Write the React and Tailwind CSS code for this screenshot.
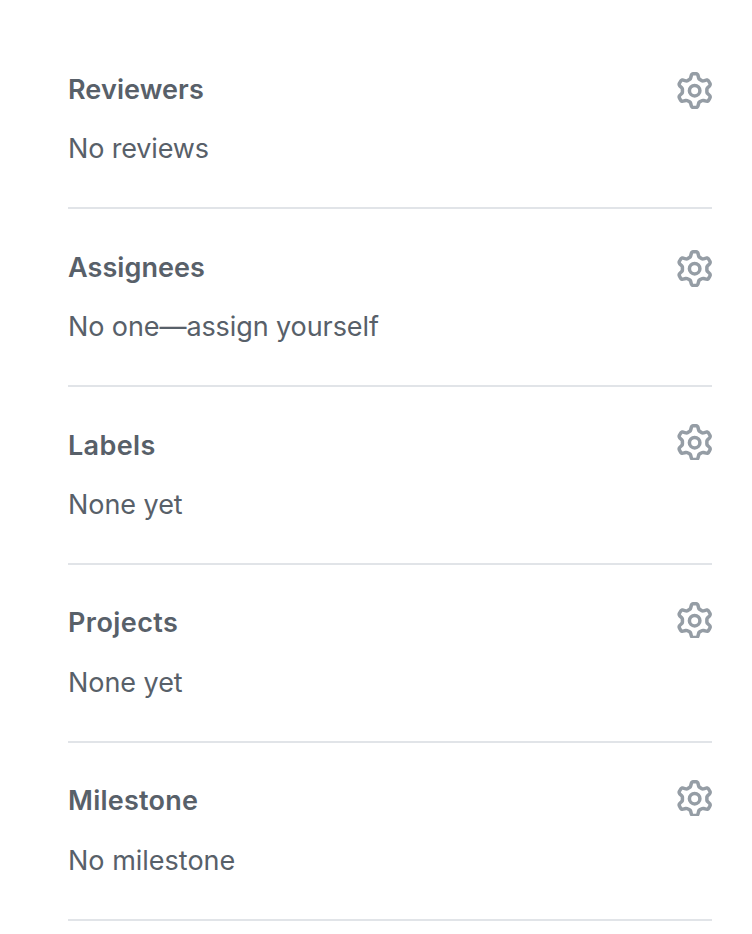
const sections = [
  { title: "Reviewers", text: "No reviews", top: "pt-[71px]", titleStyle: "tracking-[0.1px]", textStyle: "tracking-[-0.15px]", icon: "mt-px h-[37px]", shift: "mt-px" },
  { title: "Assignees", text: "No one—assign yourself", top: "pt-10", titleStyle: "tracking-[0.07px]", textStyle: "tracking-[-0.09px]", icon: "mt-px h-[37px]", shift: "mt-px" },
  { title: "Labels", text: "None yet", top: "pt-10", titleStyle: "tracking-[0.35px]", textStyle: "tracking-[-0.05px]", icon: "-mt-[3px] h-9", shift: "mt-px" },
  { title: "Projects", text: "None yet", top: "pt-10", titleStyle: "tracking-[0.43px]", textStyle: "tracking-[-0.05px]", icon: "-mt-[3px] h-9", shift: "" },
  { title: "Milestone", text: "No milestone", top: "pt-10", titleStyle: "tracking-[0.25px]", textStyle: "", icon: "-mt-[3px] h-9", shift: "" },
];

function Gear({ className }) {
  return (
    <span className={`block w-9 shrink-0 overflow-hidden text-[#959da5] ${className}`}>
      <svg viewBox="0 0 16 16" fill="currentColor" fillRule="evenodd" className="-ml-[0.3px] size-[37.33px] max-w-none" aria-hidden="true">
        <path d="M7.429 1.525a6.593 6.593 0 011.142 0c.036.003.108.036.137.146l.289 1.105c.147.56.55.967.997 1.189.174.086.341.183.501.29.417.278.97.423 1.53.27l1.102-.303c.11-.03.175.016.195.046.219.31.41.641.573.989.014.031.022.11-.059.19l-.815.806c-.411.406-.562.957-.53 1.456a4.588 4.588 0 010 .582c-.032.499.119 1.05.53 1.456l.815.806c.08.08.073.159.059.19a6.494 6.494 0 01-.573.99c-.02.029-.086.074-.195.045l-1.103-.303c-.559-.153-1.112-.008-1.529.27-.16.107-.327.204-.5.29-.449.222-.851.628-.998 1.189l-.289 1.105c-.029.11-.101.143-.137.146a6.613 6.613 0 01-1.142 0c-.036-.003-.108-.037-.137-.146l-.289-1.105c-.147-.56-.55-.967-.997-1.189a4.502 4.502 0 01-.501-.29c-.417-.278-.97-.423-1.53-.27l-1.102.303c-.11.03-.175-.016-.195-.046a6.492 6.492 0 01-.573-.989c-.014-.031-.022-.11.059-.19l.815-.806c.411-.406.562-.957.53-1.456a4.587 4.587 0 010-.582c.032-.499-.119-1.05-.53-1.456l-.815-.806c-.08-.08-.073-.159-.059-.19a6.44 6.44 0 01.573-.99c.02-.029.086-.075.195-.045l1.103.303c.559.153 1.112.008 1.529-.27.16-.107.327-.204.5-.29.449-.222.851-.628.998-1.189l.289-1.105c.029-.11.101-.143.137-.146zM8 0c-.236 0-.47.01-.701.03-.743.065-1.29.615-1.458 1.261l-.29 1.106c-.017.066-.078.158-.211.224a5.994 5.994 0 00-.668.386c-.123.082-.233.09-.3.071L3.27 2.776c-.644-.177-1.392.02-1.82.63a7.977 7.977 0 00-.704 1.217c-.315.675-.111 1.422.363 1.891l.815.806c.05.048.098.147.088.294a6.084 6.084 0 000 .772c.01.147-.038.246-.088.294l-.815.806c-.474.469-.678 1.216-.363 1.891.2.428.436.835.704 1.218.428.609 1.176.806 1.82.63l1.103-.303c.066-.019.176-.011.299.071.213.143.436.272.668.386.133.066.194.158.212.224l.289 1.106c.169.646.715 1.196 1.458 1.26a8.094 8.094 0 001.402 0c.743-.064 1.29-.614 1.458-1.26l.29-1.106c.017-.066.078-.158.211-.224a5.98 5.98 0 00.668-.386c.123-.082.233-.09.3-.071l1.102.302c.644.177 1.392-.02 1.82-.63.268-.382.505-.789.704-1.217.315-.675.111-1.422-.364-1.891l-.814-.806c-.05-.048-.098-.147-.088-.294a6.1 6.1 0 000-.772c-.01-.147.039-.246.088-.294l.814-.806c.475-.469.679-1.216.364-1.891a7.992 7.992 0 00-.704-1.218c-.428-.609-1.176-.806-1.82-.63l-1.103.303c-.066.019-.176.011-.299-.071a5.991 5.991 0 00-.668-.386c-.133-.066-.194-.158-.212-.224L10.16 1.29C9.99.645 9.444.095 8.701.031A8.094 8.094 0 008 0zm1.5 8a1.5 1.5 0 11-3 0 1.5 1.5 0 013 0zM11 8a3 3 0 11-6 0 3 3 0 016 0z" />
      </svg>
    </span>
  );
}

export default function App() {
  return (
    <main className="h-[934px] w-[752px] overflow-hidden bg-white pr-10 pl-[68px] font-['Inter',sans-serif] text-[#586069]">
      {sections.map((s) => (
        <section key={s.title} className={`${s.top} border-b-2 border-[#e1e4e8] pb-10`}>
          <div className="flex h-9 items-start justify-between">
            <h2 className={`text-[27px] leading-9 font-semibold ${s.titleStyle} ${s.shift}`}>{s.title}</h2>
            <Gear className={s.icon} />
          </div>
          <p className={`mt-6 h-9 text-[27px] leading-9 ${s.textStyle}`}>{s.text}</p>
        </section>
      ))}
    </main>
  );
}
